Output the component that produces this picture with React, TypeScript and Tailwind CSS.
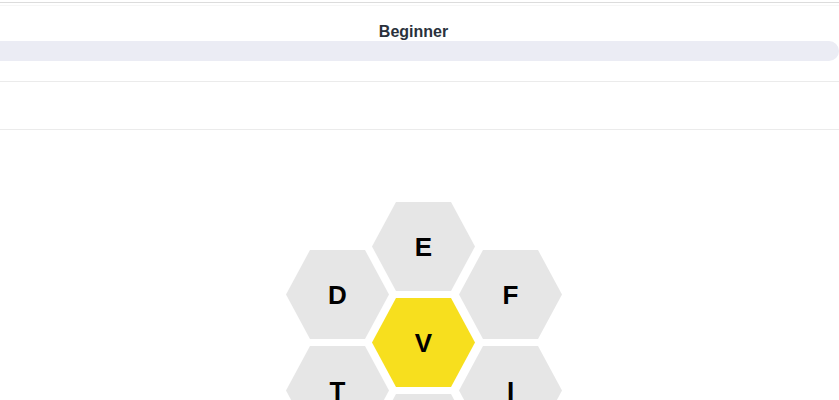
import React from 'react';

type Cell = { letter: string; x: number; y: number; center?: boolean };

const CELLS: Cell[] = [
  { letter: 'E', x: 86, y: 0 },
  { letter: 'D', x: 0, y: 48 },
  { letter: 'F', x: 173, y: 48 },
  { letter: 'V', x: 86, y: 96, center: true },
  { letter: 'T', x: 0, y: 144 },
  { letter: 'I', x: 173, y: 144 },
  { letter: 'N', x: 86, y: 192 },
];

const HexCell: React.FC<{ cell: Cell }> = ({ cell }) => (
  <div
    className="absolute w-[103px] h-[89px] flex items-center justify-center cursor-pointer"
    style={{ left: cell.x, top: cell.y }}
  >
    <svg className="absolute inset-0" width="103" height="89" viewBox="0 0 103 89">
      <polygon
        points="24,0 79,0 103,44.5 79,89 24,89 0,44.5"
        fill={cell.center ? '#f7df1e' : '#e6e6e6'}
      />
    </svg>
    <span className="relative text-[26px] font-bold text-black leading-none">{cell.letter}</span>
  </div>
);

const App: React.FC = () => {
  return (
    <div className="w-full h-[400px] overflow-hidden bg-white font-['Liberation_Sans',Arial,sans-serif]">
      <div className="h-[2px]" />
      <div className="h-[4px] border-t border-[#dcdcdc] border-b border-b-[#f6f6f6]" />

      {/* Rank + progress */}
      <div className="pt-[16px]">
        <div className="flex justify-center pr-[12px]">
          <h2 className="text-[16px] leading-[19px] font-bold text-[#2a313c]">Beginner</h2>
        </div>
        <div className="-ml-5 h-[20px] rounded-full bg-[#ebecf4]" />
      </div>

      {/* Word list */}
      <div className="mt-[20px] h-[49px] border-t border-b border-[#ebebeb]" />

      {/* Hive */}
      <div className="flex justify-center pl-[9px] mt-[72px]">
        <div className="relative w-[276px] h-[281px]">
          {CELLS.map((c) => (
            <HexCell key={c.letter} cell={c} />
          ))}
        </div>
      </div>
    </div>
  );
};

export default App;
